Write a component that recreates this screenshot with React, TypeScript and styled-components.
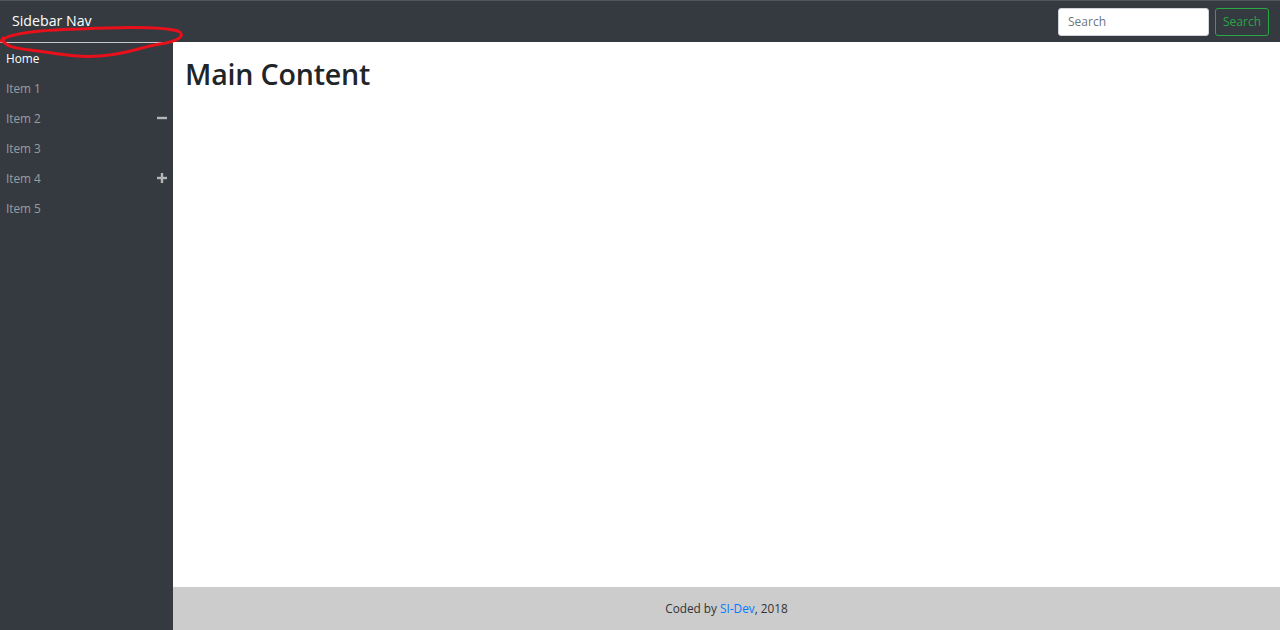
import React from 'react';
import styled, { createGlobalStyle } from 'styled-components';

const colors = {
    dark: "#343a40",
    muted: "rgba(255, 255, 255, 0.5)",
    green: "#28a745",
    footer: "#cccccc",
    link: "#007bff",
    text: "#212529"
};

const font = `"Open Sans", "Noto Sans", "Liberation Sans", sans-serif`;

const GlobalStyle = createGlobalStyle`
    html, body {
        margin: 0;
        padding: 0;
        height: 100%;
    }
    body {
        font-family: ${font};
        color: ${colors.text};
        background: #fff;
    }
    * {
        box-sizing: border-box;
    }
`;

const Page = styled.div`
    position: relative;
    display: flex;
    flex-direction: column;
    height: 100vh;
    overflow: hidden;
`;

const TopBar = styled.nav`
    display: flex;
    align-items: center;
    justify-content: space-between;
    height: 42px;
    padding: 0 11px 0 12px;
    background: ${colors.dark};
    border-top: 1px solid #50565c;
`;

const Brand = styled.span`
    color: #fff;
    font-size: 14.2px;
    line-height: 1;
`;

const SearchForm = styled.form`
    display: flex;
    align-items: center;
    gap: 6px;
`;

const SearchInput = styled.input`
    width: 151px;
    height: 28px;
    padding: 0 9px;
    border: 1px solid #ced4da;
    border-radius: 3px;
    font-family: ${font};
    font-size: 12px;
    outline: none;
    &::placeholder {
        color: #6c757d;
    }
`;

const OutlineButton = styled.button`
    width: 54px;
    height: 28px;
    padding: 0;
    background: transparent;
    border: 1px solid ${colors.green};
    border-radius: 3px;
    color: ${colors.green};
    font-family: ${font};
    font-size: 12px;
`;

const Body = styled.div`
    display: flex;
    flex: 1;
    min-height: 0;
`;

const Sidebar = styled.aside`
    width: 173px;
    flex-shrink: 0;
    background: ${colors.dark};
    border-top: 1px solid #c8c8c8;
`;

const NavItem = styled.div<{ $active?: boolean }>`
    display: flex;
    align-items: center;
    justify-content: space-between;
    height: 30px;
    padding: 0 6px;
    font-size: 11.8px;
    color: ${(props) => (props.$active ? "#fff" : colors.muted)};
`;

const Toggle = styled.span`
    display: flex;
    align-items: center;
    color: #b4b6b8;
`;

const MainColumn = styled.div`
    display: flex;
    flex-direction: column;
    flex: 1;
`;

const Content = styled.main`
    flex: 1;
    padding: 12px 12px;
`;

const Heading = styled.h1`
    margin: 0;
    font-size: 28.6px;
    font-weight: 600;
    letter-spacing: -0.2px;
`;

const Footer = styled.footer`
    display: flex;
    align-items: center;
    justify-content: center;
    height: 43px;
    padding-bottom: 2px;
    background: ${colors.footer};
    font-size: 11.8px;
    color: #333;
`;

const FooterLink = styled.a`
    color: ${colors.link};
    text-decoration: none;
`;

const Scribble = styled.svg`
    position: absolute;
    left: 0;
    top: 0;
    pointer-events: none;
`;

const MinusIcon = () => (
    <svg width="10" height="10" viewBox="0 0 10 10">
        <rect x="0" y="3.8" width="10" height="2.4" fill="currentColor" />
    </svg>
);

const PlusIcon = () => (
    <svg width="10" height="10" viewBox="0 0 10 10">
        <rect x="0" y="3.8" width="10" height="2.4" fill="currentColor" />
        <rect x="3.8" y="0" width="2.4" height="10" fill="currentColor" />
    </svg>
);

const items = [
    { label: "Home", active: true },
    { label: "Item 1" },
    { label: "Item 2", toggle: "minus" },
    { label: "Item 3" },
    { label: "Item 4", toggle: "plus" },
    { label: "Item 5" }
];

function App() {
    return (
        <>
            <GlobalStyle />
            <Page>
                <TopBar>
                    <Brand>Sidebar Nav</Brand>
                    <SearchForm onSubmit={(e) => e.preventDefault()}>
                        <SearchInput placeholder="Search" />
                        <OutlineButton type="submit">Search</OutlineButton>
                    </SearchForm>
                </TopBar>
                <Body>
                    <Sidebar>
                        {items.map((item) => (
                            <NavItem key={item.label} $active={item.active}>
                                {item.label}
                                {item.toggle && (
                                    <Toggle>{item.toggle === "minus" ? <MinusIcon /> : <PlusIcon />}</Toggle>
                                )}
                            </NavItem>
                        ))}
                    </Sidebar>
                    <MainColumn>
                        <Content>
                            <Heading>Main Content</Heading>
                        </Content>
                        <Footer>
                            <span>
                                Coded by <FooterLink href="#">SI-Dev</FooterLink>, 2018
                            </span>
                        </Footer>
                    </MainColumn>
                </Body>
                {/* red hand-drawn annotation round the brand */}
                <Scribble width="190" height="62" viewBox="0 0 190 62">
                    <path
                        d="M 1 41 C 8 33, 40 30, 80 29 C 120 27, 160 26, 178 31 C 186 35, 180 41, 160 44 C 140 47, 130 54, 100 56 C 75 58, 55 53, 30 50 C 12 48, 2 45, 3 38"
                        fill="none"
                        stroke="#e8101a"
                        strokeWidth="3"
                        strokeLinecap="round"
                    />
                </Scribble>
            </Page>
        </>
    );
}

export default App;
